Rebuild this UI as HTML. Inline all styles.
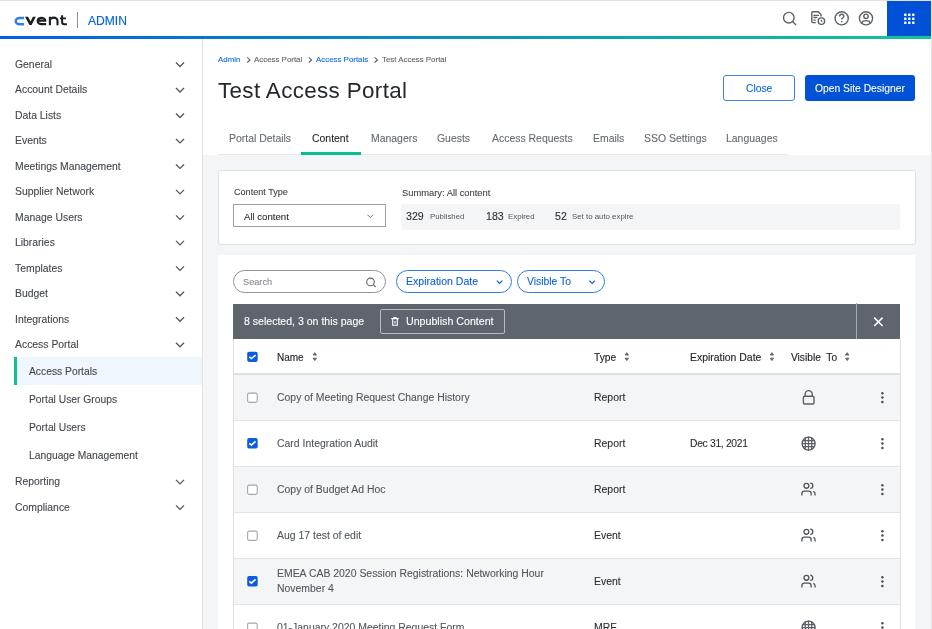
<!DOCTYPE html>
<html><head><meta charset="utf-8">
<style>
*{box-sizing:border-box;margin:0;padding:0}
html,body{width:932px;height:629px;overflow:hidden;background:#fff;font-family:"Liberation Sans",sans-serif;color:#333;position:relative}
.t{position:absolute;white-space:nowrap;will-change:transform;-webkit-text-stroke:0.1px currentColor}
.a{position:absolute}
svg{position:absolute;overflow:visible}
</style></head><body>
<div class="a" style="left:0;top:0;width:932px;height:1px;background:#e2e2e2"></div>
<div class="a" style="left:0;top:36px;width:931px;height:3px;background:linear-gradient(90deg,#0061e0 0%,#13c596 100%)"></div>
<div class="a" style="left:887px;top:1px;width:44px;height:35px;background:#0051d6"></div>
<div class="a" style="left:931px;top:0;width:1px;height:629px;background:#e4e4e4"></div>
<svg width="932" height="40" style="left:0;top:0"><rect x="904.1" y="13.6" width="2.4" height="2.4" rx="0.5" fill="#fff"/><rect x="904.1" y="17.6" width="2.4" height="2.4" rx="0.5" fill="#fff"/><rect x="904.1" y="21.6" width="2.4" height="2.4" rx="0.5" fill="#fff"/><rect x="908.1" y="13.6" width="2.4" height="2.4" rx="0.5" fill="#fff"/><rect x="908.1" y="17.6" width="2.4" height="2.4" rx="0.5" fill="#fff"/><rect x="908.1" y="21.6" width="2.4" height="2.4" rx="0.5" fill="#fff"/><rect x="912.1" y="13.6" width="2.4" height="2.4" rx="0.5" fill="#fff"/><rect x="912.1" y="17.6" width="2.4" height="2.4" rx="0.5" fill="#fff"/><rect x="912.1" y="21.6" width="2.4" height="2.4" rx="0.5" fill="#fff"/></svg>
<svg width="932" height="40" style="left:0;top:0">
<g fill="none" stroke-linecap="butt">
<path d="M24.1,18 H19.4 A3.75,3.1 0 0 0 19.4,24.2 H24.1" stroke="#2f80e6" stroke-width="2.4"/>
<path d="M37,20.7 H45.3 A4.2,2.85 0 0 0 41.1,17.9 A4.2,3.15 0 0 0 41.1,24.1 H46.2" stroke="#1b1e22" stroke-width="2.1"/>
<path d="M49.9,25.2 V16.8 M49.9,20.6 A3.8,3.0 0 0 1 57.5,20.6 V25.2" stroke="#1b1e22" stroke-width="2.1"/>
<path d="M62.1,15.3 V22 Q62.1,24.2 64.3,24.2 H66.9" stroke="#1b1e22" stroke-width="2"/>
<path d="M60,18.4 H65.9" stroke="#1b1e22" stroke-width="1.8"/>
</g>
<polygon points="25,16.8 28.1,16.8 30.5,21.6 32.9,16.8 35.8,16.8 31.6,25.1 29.4,25.1" fill="#1b1e22"/>
<rect x="77" y="12" width="1" height="16" fill="#8d9399"/>
</svg>
<div class="t" style="left:88px;top:15.05px;font-size:12.1px;line-height:13.516px;color:#0a64dc;-webkit-text-stroke:0.15px #0a64dc">ADMIN</div>
<svg width="932" height="40" style="left:0;top:0">
<g fill="none" stroke="#5b6269" stroke-width="1.4">
<circle cx="788.8" cy="17.7" r="5.3"/>
<path d="M792.6,21.6 L796,25"/>
<path d="M815.8,22.6 H812.8 Q811.8,22.6 811.8,21.6 V12.8 Q811.8,11.8 812.8,11.8 H818.3 L821,14.5 V16.4"/>
<path d="M813.4,15.3 H819 M813.4,17.5 H817.3 M813.4,20.2 H815.7" stroke-width="1.3"/>
<circle cx="821.4" cy="21.1" r="3.25"/>
<path d="M821.3,19.7 V21.2 H822.5" stroke-width="1.1"/>
<circle cx="841.7" cy="18.3" r="6.6"/>
<path d="M839.6,16.4 Q839.6,14.2 841.7,14.2 Q843.8,14.2 843.8,16.2 Q843.8,17.5 842.5,18.1 Q841.7,18.5 841.7,19.6"/>
<circle cx="866" cy="18.3" r="6.6"/>
<circle cx="866" cy="16.3" r="2.2"/>
<path d="M861.6,23.2 Q862.5,20.6 866,20.6 Q869.5,20.6 870.4,23.2"/>
</g>
<circle cx="841.7" cy="21.6" r="0.85" fill="#5b6269"/>
</svg>
<div class="a" style="left:202px;top:39px;width:1px;height:590px;background:#dfe1e4"></div>
<div class="t" style="left:15px;top:58.99px;font-size:10.4px;line-height:11.617px;color:#41464c;">General</div>
<div class="t" style="left:15px;top:84.47px;font-size:10.4px;line-height:11.617px;color:#41464c;">Account Details</div>
<div class="t" style="left:15px;top:109.95px;font-size:10.4px;line-height:11.617px;color:#41464c;">Data Lists</div>
<div class="t" style="left:15px;top:135.43px;font-size:10.4px;line-height:11.617px;color:#41464c;">Events</div>
<div class="t" style="left:15px;top:160.91px;font-size:10.4px;line-height:11.617px;color:#41464c;">Meetings Management</div>
<div class="t" style="left:15px;top:186.39px;font-size:10.4px;line-height:11.617px;color:#41464c;">Supplier Network</div>
<div class="t" style="left:15px;top:211.87px;font-size:10.4px;line-height:11.617px;color:#41464c;">Manage Users</div>
<div class="t" style="left:15px;top:237.35px;font-size:10.4px;line-height:11.617px;color:#41464c;">Libraries</div>
<div class="t" style="left:15px;top:262.83px;font-size:10.4px;line-height:11.617px;color:#41464c;">Templates</div>
<div class="t" style="left:15px;top:288.31px;font-size:10.4px;line-height:11.617px;color:#41464c;">Budget</div>
<div class="t" style="left:15px;top:313.79px;font-size:10.4px;line-height:11.617px;color:#41464c;">Integrations</div>
<div class="t" style="left:15px;top:339.27px;font-size:10.4px;line-height:11.617px;color:#41464c;">Access Portal</div>
<div class="a" style="left:14px;top:357px;width:188px;height:28px;background:#f0f6fe"></div>
<div class="a" style="left:14px;top:357px;width:3px;height:28px;background:#10c08f"></div>
<div class="t" style="left:29.3px;top:366.28px;font-size:10.3px;line-height:11.505px;color:#41464c;">Access Portals</div>
<div class="t" style="left:29.3px;top:394.28px;font-size:10.3px;line-height:11.505px;color:#41464c;">Portal User Groups</div>
<div class="t" style="left:29.3px;top:422.28px;font-size:10.3px;line-height:11.505px;color:#41464c;">Portal Users</div>
<div class="t" style="left:29.3px;top:450.28px;font-size:10.3px;line-height:11.505px;color:#41464c;">Language Management</div>
<div class="t" style="left:15px;top:476.39px;font-size:10.4px;line-height:11.617px;color:#41464c;">Reporting</div>
<div class="t" style="left:15px;top:501.89px;font-size:10.4px;line-height:11.617px;color:#41464c;">Compliance</div>
<svg width="932" height="629" style="left:0;top:0"><g fill="none" stroke="#4f5760" stroke-width="1.3"><path d="M176,62.50 L180,66.50 L184,62.50"/><path d="M176,87.98 L180,91.98 L184,87.98"/><path d="M176,113.46 L180,117.46 L184,113.46"/><path d="M176,138.94 L180,142.94 L184,138.94"/><path d="M176,164.42 L180,168.42 L184,164.42"/><path d="M176,189.90 L180,193.90 L184,189.90"/><path d="M176,215.38 L180,219.38 L184,215.38"/><path d="M176,240.86 L180,244.86 L184,240.86"/><path d="M176,266.34 L180,270.34 L184,266.34"/><path d="M176,291.82 L180,295.82 L184,291.82"/><path d="M176,317.30 L180,321.30 L184,317.30"/><path d="M176,342.78 L180,346.78 L184,342.78"/><path d="M176,479.90 L180,483.90 L184,479.90"/><path d="M176,505.40 L180,509.40 L184,505.40"/></g></svg>
<div class="a" style="left:203px;top:155px;width:728px;height:474px;background:#f4f5f7"></div>
<div class="t" style="left:218px;top:56.15px;font-size:7.9px;line-height:8.824px;color:#0a6ae0;">Admin</div>
<div class="t" style="left:254px;top:56.15px;font-size:7.9px;line-height:8.824px;color:#5b6168;">Access Portal</div>
<div class="t" style="left:315.6px;top:56.15px;font-size:7.9px;line-height:8.824px;color:#0a6ae0;">Access Portals</div>
<div class="t" style="left:381.7px;top:56.15px;font-size:7.9px;line-height:8.824px;color:#5b6168;">Test Access Portal</div>
<svg width="932" height="100" style="left:0;top:0"><g fill="none" stroke="#5b6168" stroke-width="1.1"><path d="M247.2,57.3 L250.0,59.9 L247.2,62.5"/><path d="M308.8,57.3 L311.6,59.9 L308.8,62.5"/><path d="M374.6,57.3 L377.40000000000003,59.9 L374.6,62.5"/></g></svg>
<div class="t" style="left:218.3px;top:77.73px;font-size:22.4px;line-height:25.021px;color:#24282c;letter-spacing:0.36px;-webkit-text-stroke:0">Test Access Portal</div>
<div class="a" style="left:723px;top:75px;width:72px;height:26px;border:1px solid #3b82e8;border-radius:3px;background:#fff"></div>
<div class="t" style="left:746px;top:83.08px;font-size:10.3px;line-height:11.505px;color:#0b62dc;">Close</div>
<div class="a" style="left:805px;top:75px;width:110px;height:26px;border-radius:3px;background:#0052d6"></div>
<div class="t" style="left:815.3px;top:83.08px;font-size:10.3px;line-height:11.505px;color:#ffffff;">Open Site Designer</div>
<div class="t" style="left:229px;top:133.44px;font-size:10.45px;line-height:11.673px;color:#646b72;">Portal Details</div>
<div class="t" style="left:312px;top:133.44px;font-size:10.45px;line-height:11.673px;color:#1f2227;">Content</div>
<div class="t" style="left:371px;top:133.44px;font-size:10.45px;line-height:11.673px;color:#646b72;">Managers</div>
<div class="t" style="left:437.3px;top:133.44px;font-size:10.45px;line-height:11.673px;color:#646b72;">Guests</div>
<div class="t" style="left:491.7px;top:133.44px;font-size:10.45px;line-height:11.673px;color:#646b72;">Access Requests</div>
<div class="t" style="left:593.2px;top:133.44px;font-size:10.45px;line-height:11.673px;color:#646b72;">Emails</div>
<div class="t" style="left:644.2px;top:133.44px;font-size:10.45px;line-height:11.673px;color:#646b72;">SSO Settings</div>
<div class="t" style="left:726.3px;top:133.44px;font-size:10.45px;line-height:11.673px;color:#646b72;">Languages</div>
<div class="a" style="left:218px;top:154px;width:570px;height:1px;background:#e6e8eb"></div>
<div class="a" style="left:301px;top:152px;width:60px;height:3px;background:#05bf91"></div>
<div class="a" style="left:218px;top:170px;width:698px;height:75px;background:#fff;border:1px solid #dee1e5;border-radius:3px"></div>
<div class="t" style="left:233.5px;top:186.56px;font-size:9.1px;line-height:10.165px;color:#3f444a;">Content Type</div>
<div class="a" style="left:233px;top:204px;width:153px;height:23px;border:1px solid #9ba1a7;background:#fff"></div>
<div class="t" style="left:244.3px;top:211.51px;font-size:9.6px;line-height:10.723px;color:#2a2e33;">All content</div>
<svg width="932" height="629" style="left:0;top:0"><path d="M367.5,214.8 L370.3,217.6 L373.1,214.8" fill="none" stroke="#6b7278" stroke-width="1"/></svg>
<div class="t" style="left:401.5px;top:187.54px;font-size:9.35px;line-height:10.444px;color:#3f444a;">Summary: All content</div>
<div class="a" style="left:401px;top:204px;width:499px;height:25.5px;background:#f4f5f7;border-radius:3px"></div>
<div class="t" style="left:406.3px;top:211.21px;font-size:10.6px;line-height:11.840px;color:#2a2e33;">329</div>
<div class="t" style="left:430.2px;top:212.70px;font-size:7.85px;line-height:8.768px;color:#50565d;-webkit-text-stroke:0">Published</div>
<div class="t" style="left:485.5px;top:211.21px;font-size:10.6px;line-height:11.840px;color:#2a2e33;">183</div>
<div class="t" style="left:507.5px;top:212.70px;font-size:7.85px;line-height:8.768px;color:#50565d;-webkit-text-stroke:0">Expired</div>
<div class="t" style="left:554.9px;top:211.21px;font-size:10.6px;line-height:11.840px;color:#2a2e33;">52</div>
<div class="t" style="left:571.8px;top:212.70px;font-size:7.85px;line-height:8.768px;color:#50565d;-webkit-text-stroke:0">Set to auto expire</div>
<div class="a" style="left:218px;top:255px;width:697px;height:380px;background:#fff"></div>
<div class="a" style="left:233px;top:270px;width:153px;height:23px;border:1px solid #8f959b;border-radius:12px;background:#fff"></div>
<div class="t" style="left:243.0px;top:277.07px;font-size:9.2px;line-height:10.276px;color:#868c93;">Search</div>
<svg width="932" height="629" style="left:0;top:0"><g fill="none" stroke="#5f666d" stroke-width="1.1"><circle cx="370.5" cy="281.9" r="3.8"/><path d="M373.3,284.7 L375.6,287"/></g></svg>
<div class="a" style="left:396px;top:270px;width:116px;height:23px;border:1px solid #2f7ae5;border-radius:12px;background:#fff"></div>
<div class="t" style="left:406.3px;top:276.15px;font-size:10.55px;line-height:11.784px;color:#0b62dc;">Expiration Date</div>
<div class="a" style="left:517px;top:270px;width:87.5px;height:23px;border:1px solid #2f7ae5;border-radius:12px;background:#fff"></div>
<div class="t" style="left:527.4px;top:276.33px;font-size:10.35px;line-height:11.561px;color:#0b62dc;">Visible To</div>
<svg width="932" height="629" style="left:0;top:0"><g fill="none" stroke="#0b62dc" stroke-width="1.2"><path d="M496.8,280.6 L499.6,283.4 L502.4,280.6"/><path d="M589.4,280.6 L592.2,283.4 L595,280.6"/></g></svg>
<div class="a" style="left:233px;top:303.5px;width:667px;height:35px;background:#5e656c"></div>
<div class="a" style="left:856px;top:303px;width:1px;height:35.5px;background:#a3a8ad"></div>
<div class="t" style="left:244px;top:315.55px;font-size:10.55px;line-height:11.784px;color:#ffffff;">8 selected, 3 on this page</div>
<div class="a" style="left:380px;top:308.5px;width:125px;height:25.5px;border:1px solid #b9bdc2;border-radius:2px"></div>
<div class="t" style="left:405.8px;top:315.66px;font-size:10.65px;line-height:11.896px;color:#ffffff;">Unpublish Content</div>
<svg width="932" height="629" style="left:0;top:0"><g fill="none" stroke="#fff" stroke-width="1.1">
<path d="M391.2,318.6 H398.8 M393.9,318.4 V317.6 H396.1 V318.4 M392.7,318.8 V325.2 H397.3 V318.8 M395,321 V323.4"/>
<path d="M874.2,317.6 L882.6,326 M882.6,317.6 L874.2,326" stroke-width="1.5"/>
</g></svg>
<div class="a" style="left:233px;top:338.5px;width:1px;height:300px;background:#dde0e4"></div>
<div class="a" style="left:900px;top:338.5px;width:1px;height:300px;background:#dde0e4"></div>
<div class="a" style="left:234px;top:373px;width:666px;height:2px;background:#dcdfe3"></div>
<div class="a" style="left:234px;top:375px;width:666px;height:45px;background:#f4f5f7"></div>
<div class="a" style="left:234px;top:420px;width:666px;height:1px;background:#e1e4e8"></div>
<div class="t" style="left:276.9px;top:392.44px;font-size:10.45px;line-height:11.673px;color:#50575e;">Copy of Meeting Request Change History</div>
<div class="t" style="left:593.7px;top:392.44px;font-size:10.45px;line-height:11.673px;color:#2a2e33;">Report</div>
<div class="a" style="left:234px;top:466px;width:666px;height:1px;background:#e1e4e8"></div>
<div class="t" style="left:276.9px;top:438.44px;font-size:10.45px;line-height:11.673px;color:#50575e;">Card Integration Audit</div>
<div class="t" style="left:593.7px;top:438.44px;font-size:10.45px;line-height:11.673px;color:#2a2e33;">Report</div>
<div class="t" style="left:689.5px;top:438.28px;font-size:10.3px;line-height:11.505px;color:#2a2e33;letter-spacing:-0.3px">Dec 31, 2021</div>
<div class="a" style="left:234px;top:467px;width:666px;height:45px;background:#f4f5f7"></div>
<div class="a" style="left:234px;top:512px;width:666px;height:1px;background:#e1e4e8"></div>
<div class="t" style="left:276.9px;top:484.44px;font-size:10.45px;line-height:11.673px;color:#50575e;">Copy of Budget Ad Hoc</div>
<div class="t" style="left:593.7px;top:484.44px;font-size:10.45px;line-height:11.673px;color:#2a2e33;">Report</div>
<div class="a" style="left:234px;top:558px;width:666px;height:1px;background:#e1e4e8"></div>
<div class="t" style="left:276.9px;top:530.44px;font-size:10.45px;line-height:11.673px;color:#50575e;">Aug 17 test of edit</div>
<div class="t" style="left:593.7px;top:530.44px;font-size:10.45px;line-height:11.673px;color:#2a2e33;">Event</div>
<div class="a" style="left:234px;top:559px;width:666px;height:45px;background:#f4f5f7"></div>
<div class="a" style="left:234px;top:604px;width:666px;height:1px;background:#e1e4e8"></div>
<div class="t" style="left:276.9px;top:568.14px;font-size:10.45px;line-height:11.673px;color:#50575e;">EMEA CAB 2020 Session Registrations: Networking Hour</div>
<div class="t" style="left:276.9px;top:583.14px;font-size:10.45px;line-height:11.673px;color:#50575e;">November 4</div>
<div class="t" style="left:593.7px;top:576.44px;font-size:10.45px;line-height:11.673px;color:#2a2e33;">Event</div>
<div class="a" style="left:234px;top:650px;width:666px;height:1px;background:#e1e4e8"></div>
<div class="t" style="left:276.9px;top:622.44px;font-size:10.45px;line-height:11.673px;color:#50575e;">01-January 2020 Meeting Request Form</div>
<div class="t" style="left:593.7px;top:622.44px;font-size:10.45px;line-height:11.673px;color:#2a2e33;">MRF</div>
<div class="t" style="left:276.9px;top:352.35px;font-size:10.0px;line-height:11.170px;color:#24282d;font-weight:normal;-webkit-text-stroke:0.15px #24282d">Name</div>
<div class="t" style="left:593.6px;top:352.17px;font-size:10.2px;line-height:11.393px;color:#24282d;-webkit-text-stroke:0.15px #24282d">Type</div>
<div class="t" style="left:689.5px;top:351.94px;font-size:10.45px;line-height:11.673px;color:#24282d;-webkit-text-stroke:0.15px #24282d">Expiration Date</div>
<div class="t" style="left:790.9px;top:352.17px;font-size:10.2px;line-height:11.393px;color:#24282d;-webkit-text-stroke:0.15px #24282d">Visible&nbsp; To</div>
<svg width="932" height="629" style="left:0;top:0"><rect x="247.6" y="393.1" width="9.6" height="9.3" rx="1.6" fill="#fff" stroke="#a3a9ae" stroke-width="1.1"/><circle cx="882.4" cy="393.15" r="1.25" fill="#4a5057"/><circle cx="882.4" cy="397.60" r="1.25" fill="#4a5057"/><circle cx="882.4" cy="402.05" r="1.25" fill="#4a5057"/><g fill="none" stroke="#5a6168" stroke-width="1.4"><rect x="803.4" y="396.3" width="10.6" height="7.7" rx="1.2"/><path d="M805.2,396.3 V394.1 A3.5,3.5 0 0 1 812.2,394.1 V396.3"/></g><rect x="247.2" y="438.1" width="10.5" height="10.5" rx="1.8" fill="#0b5ce0"/><path d="M249.3,443.3 L251.4,445.2 L255.5,441.4" fill="none" stroke="#fff" stroke-width="1.6"/><circle cx="882.4" cy="439.15" r="1.25" fill="#4a5057"/><circle cx="882.4" cy="443.60" r="1.25" fill="#4a5057"/><circle cx="882.4" cy="448.05" r="1.25" fill="#4a5057"/><g fill="none" stroke="#5a6168"><circle cx="808.6" cy="443.6" r="6.5" stroke-width="1.4" fill="#fff"/><path d="M805.3,437.3 V449.9 M808.5,436.6 V450.6 M811.7,437.3 V449.9 M802.3,440.5 H814.9 M802,443.6 H815.2 M802.3,446.7 H814.9" stroke-width="1.25"/></g><rect x="247.6" y="485.1" width="9.6" height="9.3" rx="1.6" fill="#fff" stroke="#a3a9ae" stroke-width="1.1"/><circle cx="882.4" cy="485.15" r="1.25" fill="#4a5057"/><circle cx="882.4" cy="489.60" r="1.25" fill="#4a5057"/><circle cx="882.4" cy="494.05" r="1.25" fill="#4a5057"/><g fill="none" stroke="#4f565d" stroke-width="1.3"><circle cx="806.4" cy="485.8" r="2.45"/><path d="M810.2,483.2 A2.6,2.6 0 0 1 810.2,488.4"/><path d="M801.9,495.6 V493.5 Q801.9,491.1 804.3,491.1 H808.7 Q811.1,491.1 811.1,493.5 V495.6"/><path d="M813.3,491.3 Q815.1,492.1 815.1,494.1 V495.6"/></g><rect x="247.6" y="531.1" width="9.6" height="9.3" rx="1.6" fill="#fff" stroke="#a3a9ae" stroke-width="1.1"/><circle cx="882.4" cy="531.15" r="1.25" fill="#4a5057"/><circle cx="882.4" cy="535.60" r="1.25" fill="#4a5057"/><circle cx="882.4" cy="540.05" r="1.25" fill="#4a5057"/><g fill="none" stroke="#4f565d" stroke-width="1.3"><circle cx="806.4" cy="531.8" r="2.45"/><path d="M810.2,529.2 A2.6,2.6 0 0 1 810.2,534.4"/><path d="M801.9,541.6 V539.5 Q801.9,537.1 804.3,537.1 H808.7 Q811.1,537.1 811.1,539.5 V541.6"/><path d="M813.3,537.3 Q815.1,538.1 815.1,540.1 V541.6"/></g><rect x="247.2" y="576.1" width="10.5" height="10.5" rx="1.8" fill="#0b5ce0"/><path d="M249.3,581.3 L251.4,583.2 L255.5,579.4" fill="none" stroke="#fff" stroke-width="1.6"/><circle cx="882.4" cy="577.15" r="1.25" fill="#4a5057"/><circle cx="882.4" cy="581.60" r="1.25" fill="#4a5057"/><circle cx="882.4" cy="586.05" r="1.25" fill="#4a5057"/><g fill="none" stroke="#4f565d" stroke-width="1.3"><circle cx="806.4" cy="577.8" r="2.45"/><path d="M810.2,575.2 A2.6,2.6 0 0 1 810.2,580.4"/><path d="M801.9,587.6 V585.5 Q801.9,583.1 804.3,583.1 H808.7 Q811.1,583.1 811.1,585.5 V587.6"/><path d="M813.3,583.3 Q815.1,584.1 815.1,586.1 V587.6"/></g><rect x="247.6" y="623.1" width="9.6" height="9.3" rx="1.6" fill="#fff" stroke="#a3a9ae" stroke-width="1.1"/><circle cx="882.4" cy="623.15" r="1.25" fill="#4a5057"/><circle cx="882.4" cy="627.60" r="1.25" fill="#4a5057"/><circle cx="882.4" cy="632.05" r="1.25" fill="#4a5057"/><g fill="none" stroke="#5a6168"><circle cx="808.6" cy="627.6" r="6.5" stroke-width="1.4" fill="#fff"/><path d="M805.3,621.3 V633.9 M808.5,620.6 V634.6 M811.7,621.3 V633.9 M802.3,624.5 H814.9 M802,627.6 H815.2 M802.3,630.7 H814.9" stroke-width="1.25"/></g><rect x="247.2" y="351.7" width="10.5" height="10.2" rx="1.8" fill="#0b5ce0"/><path d="M249.3,356.8 L251.4,358.5 L255.6,355.1" fill="none" stroke="#fff" stroke-width="1.6"/><path d="M313.1,355 L314.8,352.7 L316.5,355 Z M313.1,358.2 L314.8,360.6 L316.5,358.2 Z" fill="#5d646b" stroke="#5d646b" stroke-width="0.9" stroke-linejoin="round"/><path d="M625.0999999999999,355 L626.8,352.7 L628.5,355 Z M625.0999999999999,358.2 L626.8,360.6 L628.5,358.2 Z" fill="#5d646b" stroke="#5d646b" stroke-width="0.9" stroke-linejoin="round"/><path d="M770.1999999999999,355 L771.9,352.7 L773.6,355 Z M770.1999999999999,358.2 L771.9,360.6 L773.6,358.2 Z" fill="#5d646b" stroke="#5d646b" stroke-width="0.9" stroke-linejoin="round"/><path d="M845.5,355 L847.2,352.7 L848.9000000000001,355 Z M845.5,358.2 L847.2,360.6 L848.9000000000001,358.2 Z" fill="#5d646b" stroke="#5d646b" stroke-width="0.9" stroke-linejoin="round"/></svg>
</body></html>
